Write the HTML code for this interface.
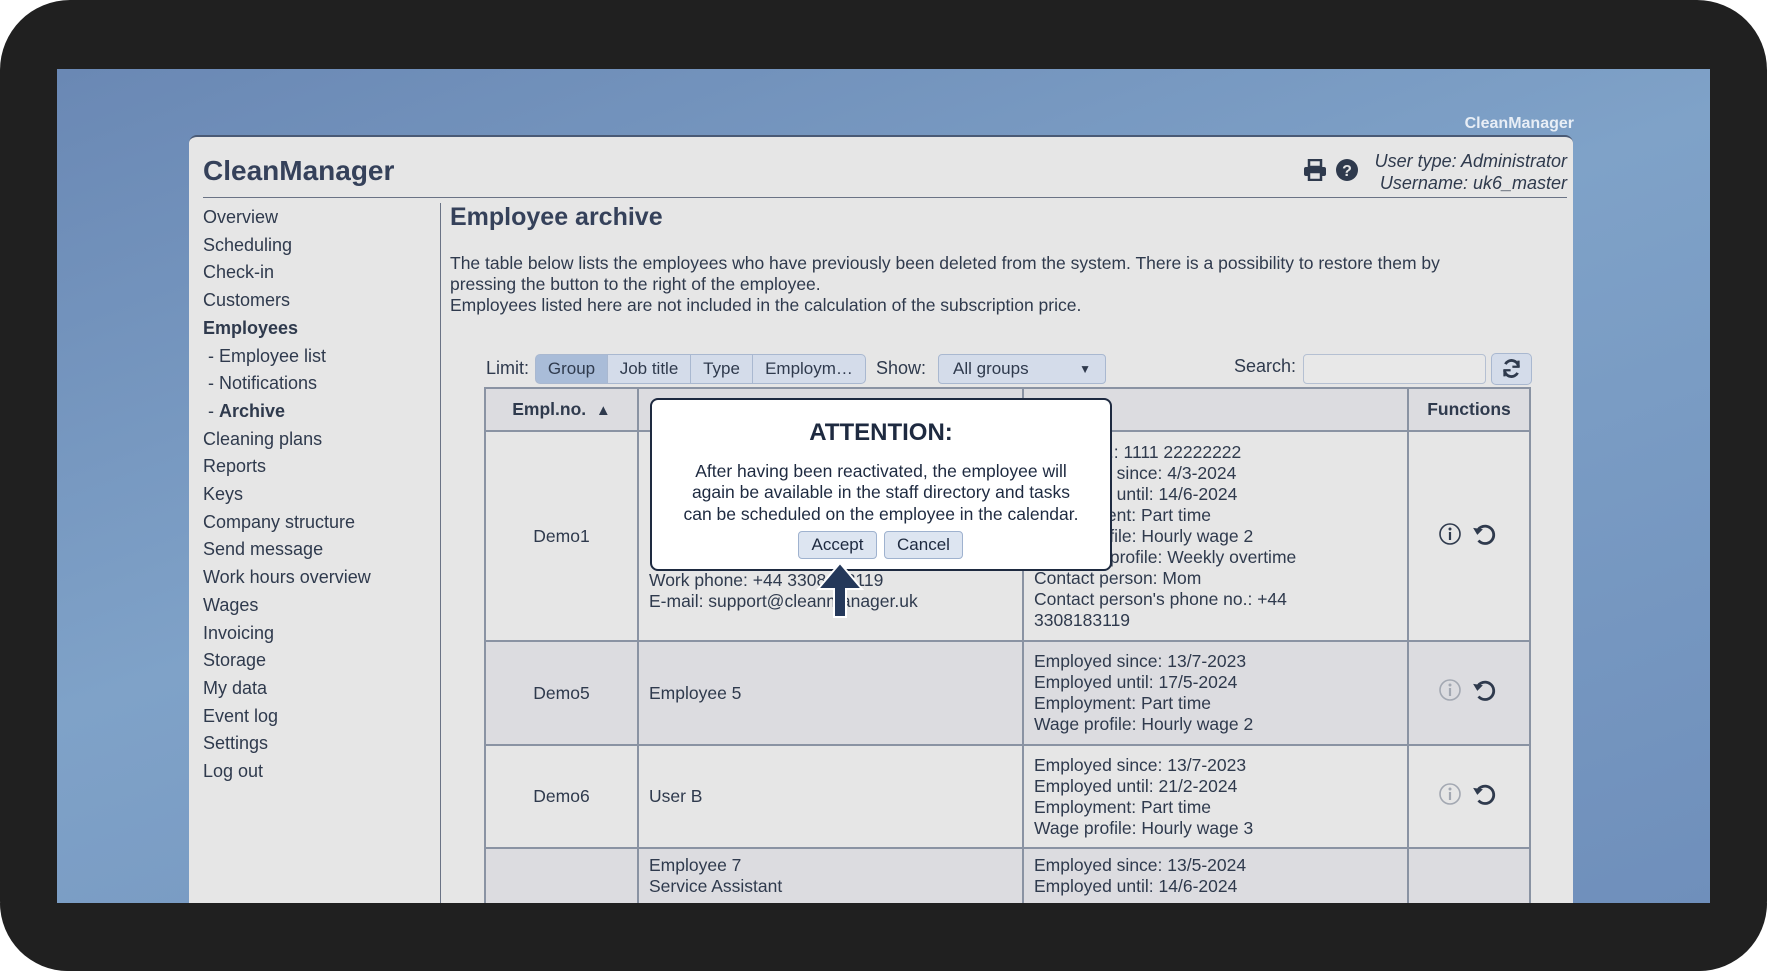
<!DOCTYPE html>
<html><head><meta charset="utf-8"><style>
*{margin:0;padding:0;box-sizing:border-box}
body{width:1767px;height:971px;background:#fff;position:relative;overflow:hidden;font-family:"Liberation Sans",sans-serif;color:#2f3a4d}
.frame{position:absolute;left:0;top:0;width:1767px;height:971px;background:#202020;border-radius:70px}
.screen{position:absolute;left:57px;top:69px;width:1653px;height:834px;background:linear-gradient(160deg,#6a88b4 0%,#7fa2c8 45%,#6f8fbb 100%);overflow:hidden}
.panel{position:absolute;left:189px;top:135px;width:1384px;height:800px;background:#e6e6e6;border-radius:8px 8px 0 0;border-top:2px solid #4a5a75}
.a{position:absolute;white-space:nowrap}
.nav{font-size:18px;line-height:27.7px;left:203px;top:204px}
.p{font-size:17.5px;line-height:20.8px;left:450px;top:253px}
.bg{position:absolute;top:354px;height:30px;background:#d4dcea;border:1px solid #a9b8d0;font-size:17px;line-height:28px;text-align:center}
table{position:absolute;left:484px;top:387px;border-collapse:collapse;font-size:17.5px;line-height:21px}
td{border:2px solid #8a93a3;vertical-align:middle;padding:0 10px}
.ic{position:absolute}
</style></head><body>
<div class="frame"></div>
<div class="screen"></div>
<div class="a" style="right:193px;top:115px;font-size:16px;font-weight:bold;color:#e8eef6">CleanManager</div>
<div class="panel"></div>
<div class="a" style="left:203px;top:155px;font-size:28px;font-weight:bold;color:#35415a">CleanManager</div>
<div style="position:absolute;left:203px;top:197px;width:1364px;height:1px;background:#6a7385"></div>
<div class="a" style="right:200px;top:150px;font-size:18px;font-style:italic;text-align:right;line-height:22px">User type: Administrator<br>Username: uk6_master</div>
<svg class="ic" style="left:1303px;top:159px" width="24" height="22" viewBox="0 0 24 22"><rect x="6" y="1" width="12" height="7" fill="none" stroke="#2f3a4d" stroke-width="2.5"/><rect x="1" y="8" width="22" height="9" rx="2" fill="#2f3a4d"/><rect x="6" y="13" width="12" height="8" fill="#e6e6e6" stroke="#2f3a4d" stroke-width="2.5"/></svg>
<svg class="ic" style="left:1336px;top:159px" width="22" height="22" viewBox="0 0 22 22"><circle cx="11" cy="11" r="11" fill="#2f3a4d"/><text x="11" y="17" font-size="16" font-weight="bold" text-anchor="middle" fill="#e6e6e6" font-family="Liberation Sans">?</text></svg>
<div style="position:absolute;left:440px;top:203px;width:1px;height:700px;background:#6a7385"></div>
<div class="a nav">Overview<br>Scheduling<br>Check-in<br>Customers<br><b>Employees</b><br>&nbsp;- Employee list<br>&nbsp;- Notifications<br>&nbsp;- <b>Archive</b><br>Cleaning plans<br>Reports<br>Keys<br>Company structure<br>Send message<br>Work hours overview<br>Wages<br>Invoicing<br>Storage<br>My data<br>Event log<br>Settings<br>Log out</div>
<div class="a" style="left:450px;top:203px;font-size:25px;font-weight:bold;color:#35415a">Employee archive</div>
<div class="a p">The table below lists the employees who have previously been deleted from the system. There is a possibility to restore them by<br>pressing the button to the right of the employee.<br>Employees listed here are not included in the calculation of the subscription price.</div>
<div class="a" style="left:486px;top:358px;font-size:18px">Limit:</div>
<div class="bg" style="left:535px;width:73px;background:#a9bcd8;border-radius:5px 0 0 5px">Group</div>
<div class="bg" style="left:607px;width:84px">Job title</div>
<div class="bg" style="left:690px;width:63px">Type</div>
<div class="bg" style="left:752px;width:114px;border-radius:0 5px 5px 0">Employm…</div>
<div class="a" style="left:876px;top:358px;font-size:18px">Show:</div>
<div class="bg" style="left:938px;width:168px;border-radius:4px;text-align:left;padding-left:14px">All groups<span style="position:absolute;right:14px;top:0;font-size:12px">▼</span></div>
<div class="a" style="left:1234px;top:356px;font-size:18px">Search:</div>
<div style="position:absolute;left:1303px;top:354px;width:183px;height:30px;border:1px solid #b5c0d2;border-radius:4px;background:#e8e8e8"></div>
<div style="position:absolute;left:1491px;top:353px;width:41px;height:32px;border:1px solid #a9b8d0;border-radius:5px;background:#d4dcea"></div>
<svg class="ic" style="left:1501px;top:358px" width="21" height="21" viewBox="0 0 24 24" fill="none" stroke="#2f3a4d" stroke-width="3.2"><path d="M20 10A8 8 0 0 0 5 7"/><path d="M4 14a8 8 0 0 0 15 3"/><path d="M20 3v7h-7" stroke-width="2.6"/><path d="M4 21v-7h7" stroke-width="2.6"/></svg>
<table>
<tr style="height:43px;background:#dcdce0"><td style="width:153px;text-align:center;font-weight:bold">Empl.no. &nbsp;<span style="font-size:15px">▲</span></td><td style="width:385px"></td><td style="width:385px"></td><td style="width:122px;text-align:center;font-weight:bold">Functions</td></tr>
<tr style="height:210px;background:#e6e6e6"><td style="text-align:center">Demo1</td><td style="vertical-align:top;padding-top:138px">Work phone: +44 3308183119<br>E-mail: support@cleanmanager.uk</td><td style="vertical-align:top;padding-top:10px">Phone no.: 1111 22222222<br>Employed since: 4/3-2024<br>Employed until: 14/6-2024<br>Employment: Part time<br>Wage profile: Hourly wage 2<br>Overtime profile: Weekly overtime<br>Contact person: Mom<br>Contact person's phone no.: +44<br>3308183119</td><td></td></tr>
<tr style="height:104px;background:#dcdce0"><td style="text-align:center">Demo5</td><td>Employee 5</td><td>Employed since: 13/7-2023<br>Employed until: 17/5-2024<br>Employment: Part time<br>Wage profile: Hourly wage 2</td><td></td></tr>
<tr style="height:103px;background:#e6e6e6"><td style="text-align:center">Demo6</td><td>User B</td><td>Employed since: 13/7-2023<br>Employed until: 21/2-2024<br>Employment: Part time<br>Wage profile: Hourly wage 3</td><td></td></tr>
<tr style="height:70px;background:#dcdce0"><td></td><td style="vertical-align:top;padding-top:6px">Employee 7<br>Service Assistant</td><td style="vertical-align:top;padding-top:6px">Employed since: 13/5-2024<br>Employed until: 14/6-2024</td><td></td></tr>
</table>
<svg class="ic" style="left:1438px;top:522px" width="24" height="24" viewBox="0 0 24 24"><circle cx="12" cy="12" r="10" fill="none" stroke="#2f3a4d" stroke-width="1.6"/><circle cx="12" cy="7" r="1.5" fill="#2f3a4d"/><path d="M12 10v8" stroke="#2f3a4d" stroke-width="2.2"/></svg>
<svg class="ic" style="left:1472px;top:521px" width="26" height="26" viewBox="0 0 24 24" fill="none" stroke="#2f3a4d" stroke-width="2.6"><path d="M5 9a8 8 0 1 1 1 9"/><path d="M2 7l3 5 4-4z" fill="#2f3a4d" stroke-width="1"/></svg>
<svg class="ic" style="left:1438px;top:678px" width="24" height="24" viewBox="0 0 24 24"><circle cx="12" cy="12" r="10" fill="none" stroke="#a3a8b2" stroke-width="1.6"/><circle cx="12" cy="7" r="1.5" fill="#a3a8b2"/><path d="M12 10v8" stroke="#a3a8b2" stroke-width="2.2"/></svg>
<svg class="ic" style="left:1472px;top:677px" width="26" height="26" viewBox="0 0 24 24" fill="none" stroke="#2f3a4d" stroke-width="2.6"><path d="M5 9a8 8 0 1 1 1 9"/><path d="M2 7l3 5 4-4z" fill="#2f3a4d" stroke-width="1"/></svg>
<svg class="ic" style="left:1438px;top:782px" width="24" height="24" viewBox="0 0 24 24"><circle cx="12" cy="12" r="10" fill="none" stroke="#a3a8b2" stroke-width="1.6"/><circle cx="12" cy="7" r="1.5" fill="#a3a8b2"/><path d="M12 10v8" stroke="#a3a8b2" stroke-width="2.2"/></svg>
<svg class="ic" style="left:1472px;top:781px" width="26" height="26" viewBox="0 0 24 24" fill="none" stroke="#2f3a4d" stroke-width="2.6"><path d="M5 9a8 8 0 1 1 1 9"/><path d="M2 7l3 5 4-4z" fill="#2f3a4d" stroke-width="1"/></svg>
<div style="position:absolute;left:0;top:903px;width:1767px;height:68px;background:#202020;border-radius:0 0 70px 70px"></div>
<div style="position:absolute;left:650px;top:398px;width:462px;height:173px;background:#fff;border:2px solid #1e2a40;border-radius:8px"></div>
<div class="a" style="left:650px;width:462px;top:419px;text-align:center;font-size:24px;font-weight:bold;color:#1e2a40">ATTENTION:</div>
<div class="a" style="left:650px;width:462px;top:461px;text-align:center;font-size:17.5px;line-height:21.3px;color:#1e2a40">After having been reactivated, the employee will<br>again be available in the staff directory and tasks<br>can be scheduled on the employee in the calendar.</div>
<div style="position:absolute;left:798px;top:531px;width:79px;height:28px;border:1px solid #9fb2cf;border-radius:4px;background:#dde5f1;text-align:center;font-size:17px;line-height:26px;color:#1e2a40">Accept</div>
<div style="position:absolute;left:884px;top:531px;width:79px;height:28px;border:1px solid #9fb2cf;border-radius:4px;background:#dde5f1;text-align:center;font-size:17px;line-height:26px;color:#1e2a40">Cancel</div>
<svg class="ic" style="left:814px;top:561px" width="52" height="58" viewBox="0 0 52 58"><path d="M26 2L48 28H32V56H20V28H4Z" fill="#24385a" stroke="#fff" stroke-width="2"/></svg>
</body></html>
